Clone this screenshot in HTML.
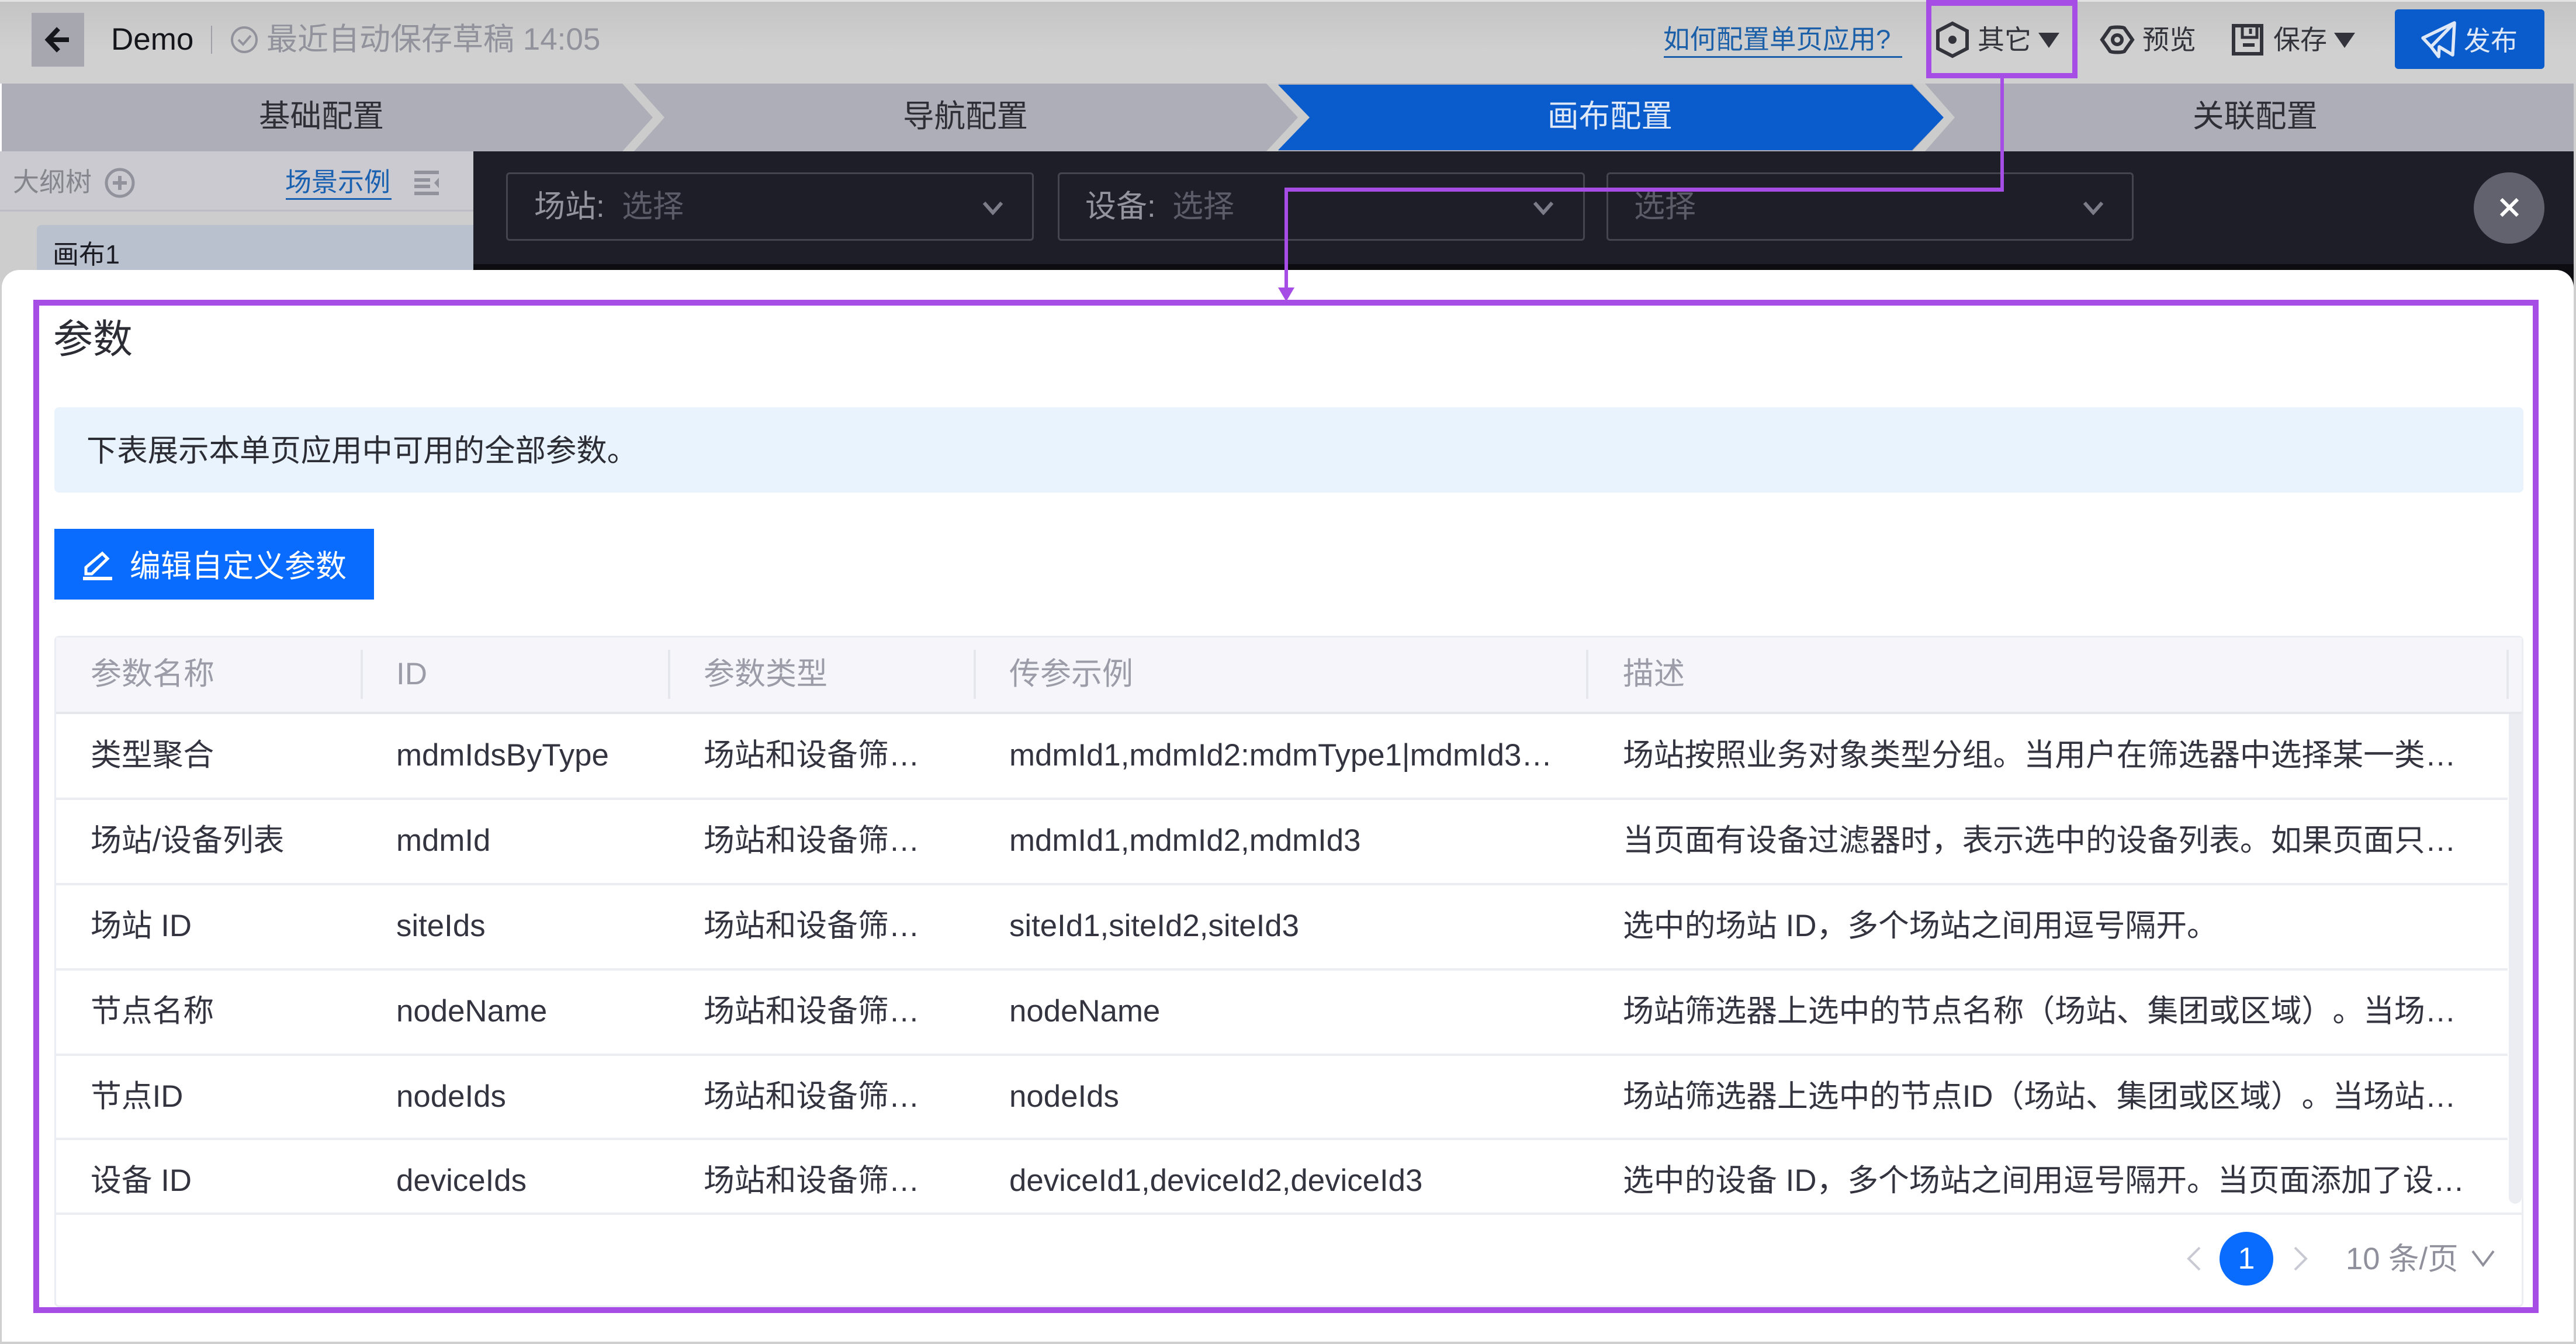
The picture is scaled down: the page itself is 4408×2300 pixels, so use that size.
<!DOCTYPE html>
<html><head><meta charset="utf-8">
<style>
html,body{margin:0;padding:0;width:4408px;height:2300px;overflow:hidden;background:#fff}
body{position:relative;font-family:"Liberation Sans","Noto Sans CJK SC",sans-serif;text-spacing-trim:space-all}
.a{position:absolute}
.t{position:absolute;white-space:nowrap;line-height:80px;height:80px}
.r{font-size:52.8px;color:#33343f}
.h{font-size:53px;color:#9b9ca7}
.line{position:absolute;left:96px;width:4195px;height:4px;background:#ecedf2}
.sep{position:absolute;top:1112px;width:4px;height:84px;background:#e6e7ed}
.p{position:absolute;background:#a64de6}
</style></head><body>

<!-- top bar -->
<div class="a" style="left:0;top:0;width:4408px;height:143px;background:linear-gradient(#c4c4c4,#d0d0d0 60%);border-top:3px solid #e2e2e2;box-sizing:border-box"></div>
<div class="a" style="left:54px;top:22px;width:90px;height:92px;background:#a7a7b0"></div>
<svg class="a" style="left:76px;top:44px" width="46" height="48" viewBox="0 0 46 48"><path d="M42 24H10M24 5L6 24l18 19" fill="none" stroke="#15151c" stroke-width="8"/></svg>
<div class="t" style="left:190px;top:28px;font-size:53px;color:#15151c">Demo</div>
<div class="a" style="left:361px;top:44px;width:2px;height:48px;background:#a0a0a8"></div>
<svg class="a" style="left:393px;top:43px" width="50" height="50" viewBox="0 0 50 50"><circle cx="25" cy="25" r="21" fill="none" stroke="#92929c" stroke-width="4"/><path d="M15 25l8 8 13-15" fill="none" stroke="#92929c" stroke-width="4"/></svg>
<div class="t" style="left:456px;top:28px;font-size:53px;color:#92929c">最近自动保存草稿 14:05</div>

<div class="t" style="left:2846px;top:28px;font-size:45.5px;color:#1a5fa8">如何配置单页应用?</div>
<div class="a" style="left:2847px;top:96px;width:408px;height:3px;background:#1a5fa8"></div>
<svg class="a" style="left:3310px;top:36px" width="62" height="64" viewBox="0 0 62 64"><path d="M31 4L56 17V47L31 60 6 47V17Z" fill="none" stroke="#33333c" stroke-width="6"/><circle cx="31" cy="32" r="7" fill="#33333c"/></svg>
<div class="t" style="left:3384px;top:28px;font-size:46px;color:#33333c">其它</div>
<svg class="a" style="left:3488px;top:56px" width="36" height="26" viewBox="0 0 36 26"><path d="M0 0H36L18 26Z" fill="#33333c"/></svg>
<svg class="a" style="left:3593px;top:42px" width="60" height="52" viewBox="0 0 60 52"><path d="M4 26L18 6C22 4 38 4 42 6L56 26 42 46C38 48 22 48 18 46Z" fill="none" stroke="#33333c" stroke-width="6"/><circle cx="30" cy="26" r="8" fill="none" stroke="#33333c" stroke-width="6"/></svg>
<div class="t" style="left:3666px;top:28px;font-size:46px;color:#33333c">预览</div>
<svg class="a" style="left:3818px;top:40px" width="56" height="56" viewBox="0 0 56 56"><path d="M4 4H52V52H4Z" fill="none" stroke="#33333c" stroke-width="6"/><path d="M19 5V24H44V5M33 9V18" fill="none" stroke="#33333c" stroke-width="5"/><path d="M20 37H40" stroke="#33333c" stroke-width="6"/></svg>
<div class="t" style="left:3890px;top:28px;font-size:46px;color:#33333c">保存</div>
<svg class="a" style="left:3994px;top:56px" width="36" height="26" viewBox="0 0 36 26"><path d="M0 0H36L18 26Z" fill="#33333c"/></svg>
<div class="a" style="left:4098px;top:16px;width:256px;height:102px;background:#0a5ccc;border-radius:6px"></div>
<svg class="a" style="left:4140px;top:34px" width="66" height="68" viewBox="0 0 66 68"><path d="M60 5L6 31 20 46 60 5 57 60 34 46 33 63 20 46" fill="none" stroke="#dfe8f6" stroke-width="5.5" stroke-linejoin="round"/></svg>
<div class="t" style="left:4216px;top:30px;font-size:46px;color:#dfe8f6">发布</div>

<!-- steps -->
<div class="a" style="left:3px;top:143px;width:4402px;height:116px;background:#aeaeb8"></div>
<svg class="a" style="left:0;top:143px" width="4408" height="116" viewBox="0 0 4408 116">
<path d="M1065 0H1085L1137 58 1085 116H1065L1117 58Z" fill="#cccccc"/>
<path d="M2167 0H2187L2241 58 2187 116H2167L2221 58Z" fill="#cccccc"/>
<path d="M2187 2H3272L3326 58 3272 114H2187L2241 58Z" fill="#0a5ccc"/>
<path d="M3272 0H3294L3345 58 3294 116H3272L3326 58Z" fill="#cccccc"/>
</svg>
<div class="t" style="left:443px;top:160px;font-size:53.5px;color:#2e2e36">基础配置</div>
<div class="t" style="left:1545px;top:160px;font-size:53.5px;color:#2e2e36">导航配置</div>
<div class="t" style="left:2648px;top:160px;font-size:53.5px;color:#dfe8f6">画布配置</div>
<div class="t" style="left:3752px;top:160px;font-size:53.5px;color:#2e2e36">关联配置</div>

<!-- sidebar -->
<div class="a" style="left:0;top:259px;width:810px;height:100px;background:#cacad0;border-bottom:3px solid #bcbcc4;box-sizing:content-box"></div>
<div class="a" style="left:0;top:362px;width:810px;height:140px;background:#cdcdcd"></div>
<div class="a" style="left:63px;top:385px;width:747px;height:110px;background:#b9c1ce;border-radius:8px 0 0 0"></div>
<div class="t" style="left:22px;top:272px;font-size:45px;color:#85858d">大纲树</div>
<svg class="a" style="left:178px;top:286px" width="54" height="54" viewBox="0 0 54 54"><circle cx="27" cy="27" r="23" fill="none" stroke="#92929c" stroke-width="5"/><path d="M27 15V39M15 27H39" stroke="#92929c" stroke-width="6"/></svg>
<div class="t" style="left:488px;top:272px;font-size:45px;color:#1a60b0">场景示例</div>
<div class="a" style="left:489px;top:339px;width:181px;height:3px;background:#1a60b0"></div>
<svg class="a" style="left:708px;top:292px" width="44" height="44" viewBox="0 0 44 44"><path d="M1 3H43M1 39H43M1 16H28M1 27H28" stroke="#92929c" stroke-width="6"/><path d="M43 12L35 21l8 9Z" fill="#92929c"/></svg>
<div class="t" style="left:90px;top:396px;font-size:45px;color:#1c1c24">画布1</div>

<!-- dark -->
<div class="a" style="left:810px;top:259px;width:3594px;height:245px;background:#1e1e28"></div>
<div class="a" style="left:810px;top:452px;width:3594px;height:52px;background:#0c0c11"></div>
<div class="a" style="left:4404px;top:143px;width:4px;height:2157px;background:#cfcfcf"></div>
<div class="a" style="left:866px;top:295px;width:903px;height:117px;box-sizing:border-box;border:3px solid #454550;border-radius:6px"></div>
<div class="a" style="left:1810px;top:295px;width:902px;height:117px;box-sizing:border-box;border:3px solid #454550;border-radius:6px"></div>
<div class="a" style="left:2749px;top:295px;width:902px;height:117px;box-sizing:border-box;border:3px solid #454550;border-radius:6px"></div>
<div class="t" style="left:914px;top:314px;font-size:53px;color:#94949e">场站:</div>
<div class="t" style="left:1064px;top:314px;font-size:53px;color:#5c5c68">选择</div>
<div class="t" style="left:1857px;top:314px;font-size:53px;color:#94949e">设备:</div>
<div class="t" style="left:2006px;top:314px;font-size:53px;color:#5c5c68">选择</div>
<div class="t" style="left:2796px;top:314px;font-size:53px;color:#5c5c68">选择</div>
<svg class="a" style="left:1681px;top:344px" width="36" height="24" viewBox="0 0 36 24"><path d="M3 3L18 20 33 3" fill="none" stroke="#7c7c88" stroke-width="6"/></svg>
<svg class="a" style="left:2623px;top:344px" width="36" height="24" viewBox="0 0 36 24"><path d="M3 3L18 20 33 3" fill="none" stroke="#7c7c88" stroke-width="6"/></svg>
<svg class="a" style="left:3564px;top:344px" width="36" height="24" viewBox="0 0 36 24"><path d="M3 3L18 20 33 3" fill="none" stroke="#7c7c88" stroke-width="6"/></svg>
<div class="a" style="left:4233px;top:295px;width:121px;height:122px;border-radius:50%;background:#62626e"></div>
<svg class="a" style="left:4270px;top:331px" width="48" height="48" viewBox="0 0 48 48"><path d="M10 10L38 38M38 10L10 38" stroke="#fff" stroke-width="6"/></svg>

<!-- panel -->
<div class="a" style="left:0;top:480px;width:3px;height:1820px;background:#cfcfcf"></div>
<div class="a" style="left:0;top:2296px;width:4408px;height:4px;background:#cfcfcf"></div>
<div class="a" style="left:3px;top:462px;width:4401px;height:1834px;background:#fff;border-radius:30px 30px 0 0"></div>

<div class="t" style="left:91px;top:541px;font-size:68px;color:#2c2c34">参数</div>
<div class="a" style="left:93px;top:697px;width:4225px;height:146px;background:#e8f3fe;border-radius:8px"></div>
<div class="t" style="left:148px;top:732px;font-size:52.4px;color:#2c2c34">下表展示本单页应用中可用的全部参数。</div>
<div class="a" style="left:93px;top:905px;width:547px;height:121px;background:#0a6cff"></div>
<svg class="a" style="left:140px;top:940px" width="56" height="56" viewBox="0 0 56 56"><path d="M7 42V31L35 7l9 9-27 26Z" fill="none" stroke="#fff" stroke-width="5"/><path d="M2 50H52" stroke="#fff" stroke-width="6"/></svg>
<div class="t" style="left:222px;top:930px;font-size:53px;color:#fff">编辑自定义参数</div>

<!-- table -->
<div class="a" style="left:93px;top:1088px;width:4225px;height:1149px;box-sizing:border-box;border:3px solid #ecedf2;border-radius:8px"></div>
<div class="a" style="left:96px;top:1091px;width:4219px;height:127px;background:#f5f5fa"></div>
<div class="a" style="left:96px;top:1218px;width:4219px;height:4px;background:#e6e7ed"></div>
<div class="sep" style="left:617px"></div><div class="sep" style="left:1143px"></div><div class="sep" style="left:1666px"></div><div class="sep" style="left:2714px"></div><div class="sep" style="left:4289px"></div>
<div class="t h" style="left:155px;top:1114px">参数名称</div>
<div class="t h" style="left:678px;top:1114px">ID</div>
<div class="t h" style="left:1204px;top:1114px">参数类型</div>
<div class="t h" style="left:1727px;top:1114px">传参示例</div>
<div class="t h" style="left:2777px;top:1114px">描述</div>

<div class="a" style="left:4293px;top:1222px;width:22px;height:838px;background:#ecedf2;border-radius:0 0 11px 11px"></div>
<div class="line" style="top:1365px"></div>
<div class="line" style="top:1511px"></div>
<div class="line" style="top:1657px"></div>
<div class="line" style="top:1803px"></div>
<div class="line" style="top:1947px"></div>
<div class="a" style="left:96px;top:2075px;width:4219px;height:4px;background:#ecedf2"></div>

<div class="t r" style="left:155px;top:1253px">类型聚合</div>
<div class="t r" style="left:678px;top:1253px">mdmIdsByType</div>
<div class="t r" style="left:1204px;top:1253px">场站和设备筛…</div>
<div class="t r" style="left:1727px;top:1253px">mdmId1,mdmId2:mdmType1|mdmId3…</div>
<div class="t r" style="left:2777px;top:1253px">场站按照业务对象类型分组。当用户在筛选器中选择某一类…</div>

<div class="t r" style="left:155px;top:1399px">场站/设备列表</div>
<div class="t r" style="left:678px;top:1399px">mdmId</div>
<div class="t r" style="left:1204px;top:1399px">场站和设备筛…</div>
<div class="t r" style="left:1727px;top:1399px">mdmId1,mdmId2,mdmId3</div>
<div class="t r" style="left:2777px;top:1399px">当页面有设备过滤器时，表示选中的设备列表。如果页面只…</div>

<div class="t r" style="left:155px;top:1545px">场站 ID</div>
<div class="t r" style="left:678px;top:1545px">siteIds</div>
<div class="t r" style="left:1204px;top:1545px">场站和设备筛…</div>
<div class="t r" style="left:1727px;top:1545px">siteId1,siteId2,siteId3</div>
<div class="t r" style="left:2777px;top:1545px">选中的场站 ID，多个场站之间用逗号隔开。</div>

<div class="t r" style="left:155px;top:1691px">节点名称</div>
<div class="t r" style="left:678px;top:1691px">nodeName</div>
<div class="t r" style="left:1204px;top:1691px">场站和设备筛…</div>
<div class="t r" style="left:1727px;top:1691px">nodeName</div>
<div class="t r" style="left:2777px;top:1691px">场站筛选器上选中的节点名称（场站、集团或区域）。当场…</div>

<div class="t r" style="left:155px;top:1837px">节点ID</div>
<div class="t r" style="left:678px;top:1837px">nodeIds</div>
<div class="t r" style="left:1204px;top:1837px">场站和设备筛…</div>
<div class="t r" style="left:1727px;top:1837px">nodeIds</div>
<div class="t r" style="left:2777px;top:1837px">场站筛选器上选中的节点ID（场站、集团或区域）。当场站…</div>

<div class="t r" style="left:155px;top:1981px">设备 ID</div>
<div class="t r" style="left:678px;top:1981px">deviceIds</div>
<div class="t r" style="left:1204px;top:1981px">场站和设备筛…</div>
<div class="t r" style="left:1727px;top:1981px">deviceId1,deviceId2,deviceId3</div>
<div class="t r" style="left:2777px;top:1981px">选中的设备 ID，多个场站之间用逗号隔开。当页面添加了设…</div>

<!-- pagination -->
<svg class="a" style="left:3740px;top:2132px" width="28" height="44" viewBox="0 0 28 44"><path d="M24 3L5 22l19 19" fill="none" stroke="#c8c9d2" stroke-width="4"/></svg>
<div class="a" style="left:3798px;top:2108px;width:92px;height:92px;border-radius:50%;background:#0a6cff"></div>
<div class="t" style="left:3798px;top:2114px;width:92px;text-align:center;font-size:52px;color:#fff">1</div>
<svg class="a" style="left:3923px;top:2132px" width="28" height="44" viewBox="0 0 28 44"><path d="M4 3l19 19L4 41" fill="none" stroke="#c8c9d2" stroke-width="4"/></svg>
<div class="t" style="left:4014px;top:2115px;font-size:52.5px;color:#8f909c">10 条/页</div>
<svg class="a" style="left:4228px;top:2138px" width="42" height="30" viewBox="0 0 42 30"><path d="M3 3L21 27 39 3" fill="none" stroke="#8f909c" stroke-width="4"/></svg>

<!-- purple annotations -->
<div class="a" style="left:57px;top:513px;width:4287px;height:1734px;box-sizing:border-box;border:10px solid #a64de6"></div>
<div class="a" style="left:3296px;top:0;width:259px;height:134px;box-sizing:border-box;border:9px solid #a64de6;border-top-width:10px"></div>
<div class="p" style="left:3423px;top:134px;width:6px;height:193px"></div>
<div class="p" style="left:2198px;top:321px;width:1231px;height:7px"></div>
<div class="p" style="left:2198px;top:321px;width:6px;height:175px"></div>
<svg class="a" style="left:2187px;top:492px" width="28" height="24" viewBox="0 0 28 24"><path d="M0 0H28L14 24Z" fill="#a64de6"/></svg>
</body></html>
